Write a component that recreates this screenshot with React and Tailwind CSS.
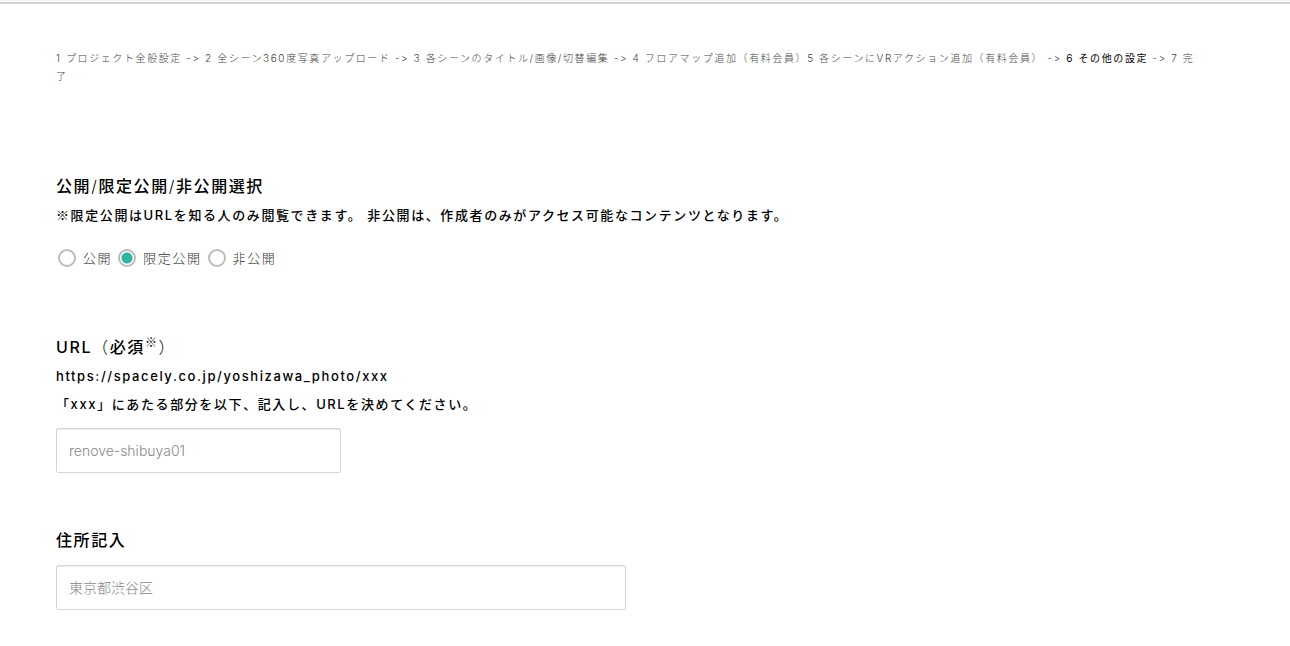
const VISIBILITY = [
  ['public', '公開'],
  ['limited', '限定公開'],
  ['private', '非公開'],
];

const HEADING = 'block text-base leading-[30px] font-medium';

const INPUT =
  'mt-[10px] block h-[45px] w-full rounded-[2px] border border-[#d3d5d7] bg-white px-3 text-sm font-light tracking-normal text-[#555] shadow-[inset_0_1px_1px_rgba(0,0,0,0.08)] outline-none placeholder:text-[#888]';

const MARK = "font-['Noto_Sans_CJK_JP',sans-serif] font-light";

export default function App() {
  return (
    <div className="bg-white font-['Inter','Noto_Sans_CJK_JP',sans-serif] tracking-widest text-black">
      <header className="h-1 border-b-2 border-[#d2d2d2] bg-[#f7f7f7]" />
      <main className="pt-[45px] pr-[88px] pb-9 pl-14">
        <p className="text-[10px] leading-[18px] font-light text-[#444]">
          1 プロジェクト全般設定 -&gt; 2 全シーン360度写真アップロード -&gt; 3 各シーンのタイトル/画像/切替編集 -&gt; 4
          フロアマップ追加（有料会員）5 各シーンにVRアクション追加（有料会員） -&gt;{' '}
          <span className="font-normal text-black" aria-current="step">
            6 その他の設定
          </span>{' '}
          -&gt; 7 完了
        </p>

        <form>
          <fieldset className="mt-[86px]">
            <legend className={HEADING}>
              公開<span className="font-light">/</span>限定公開<span className="font-light">/</span>非公開選択
            </legend>
            <p className="text-[13px] leading-7 font-medium">
              <span className={MARK}>※</span>
              限定公開はURLを知る人のみ閲覧できます。 非公開は、作成者のみがアクセス可能なコンテンツとなります。
            </p>
            <div className="mt-[19px] flex gap-[6px] pl-[2px] text-[13px] leading-5 font-light text-[#333]">
              {VISIBILITY.map(([value, label]) => (
                <label key={value} className="flex items-center gap-[7px]">
                  <input
                    type="radio"
                    name="visibility"
                    value={value}
                    defaultChecked={value === 'limited'}
                    className="size-[18px] appearance-none rounded-full border-2 border-[#bbb] bg-white checked:bg-[radial-gradient(circle,#35b3a2_5px,#fff_6px)]"
                  />
                  {label}
                </label>
              ))}
            </div>
          </fieldset>

          <section className="mt-16">
            <label htmlFor="slug" className={HEADING}>
              URL<span className="font-light">（</span>必須
              <sup className={`${MARK} text-xs`}>※</sup>
              <span className="font-light">）</span>
            </label>
            <p className="text-[13px] leading-7 font-medium">
              https://spacely.co.jp/yoshizawa_photo/xxx
              <br />
              「xxx」にあたる部分を以下、記入し、URLを決めてください。
            </p>
            <div className="max-w-[285px]">
              <input id="slug" type="text" placeholder="renove-shibuya01" className={INPUT} />
            </div>
          </section>

          <section className="mt-[52px]">
            <label htmlFor="address" className={HEADING}>
              住所記入
            </label>
            <div className="max-w-[570px]">
              <input id="address" type="text" placeholder="東京都渋谷区" className={INPUT} />
            </div>
          </section>
        </form>
      </main>
    </div>
  );
}
